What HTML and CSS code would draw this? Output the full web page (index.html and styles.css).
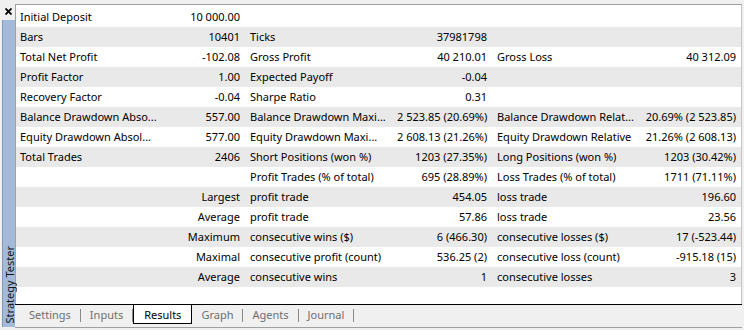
FILE: index.html
```html
<!DOCTYPE html>
<html lang="en">
<head>
    <meta charset="utf-8">
    <link rel="stylesheet" href="styles.css">
</head>
<body>
    <div class="window">
        <div class="side">
            <svg class="close" width="7" height="7" viewBox="0 0 7 7">
                <path d="M0.5 0.5 L6.5 6.5 M6.5 0.5 L0.5 6.5" stroke="#000" stroke-width="1.8" fill="none"/>
            </svg>
            <div class="side-bar">
                <span class="side-title">Strategy Tester</span>
            </div>
        </div>

        <div class="main">
            <div class="report">
                <div class="row">
                    <div class="cell">Initial Deposit</div><div class="cell num">10 000.00</div>
                    <div class="cell"></div><div class="cell num"></div>
                    <div class="cell"></div><div class="cell num"></div>
                </div>
                <div class="row">
                    <div class="cell">Bars</div><div class="cell num">10401</div>
                    <div class="cell">Ticks</div><div class="cell num">37981798</div>
                    <div class="cell"></div><div class="cell num"></div>
                </div>
                <div class="row">
                    <div class="cell">Total Net Profit</div><div class="cell num">-102.08</div>
                    <div class="cell">Gross Profit</div><div class="cell num">40 210.01</div>
                    <div class="cell">Gross Loss</div><div class="cell num">40 312.09</div>
                </div>
                <div class="row">
                    <div class="cell">Profit Factor</div><div class="cell num">1.00</div>
                    <div class="cell">Expected Payoff</div><div class="cell num">-0.04</div>
                    <div class="cell"></div><div class="cell num"></div>
                </div>
                <div class="row">
                    <div class="cell">Recovery Factor</div><div class="cell num">-0.04</div>
                    <div class="cell">Sharpe Ratio</div><div class="cell num">0.31</div>
                    <div class="cell"></div><div class="cell num"></div>
                </div>
                <div class="row">
                    <div class="cell">Balance Drawdown Abso...</div><div class="cell num">557.00</div>
                    <div class="cell">Balance Drawdown Maxi...</div><div class="cell num">2 523.85 (20.69%)</div>
                    <div class="cell">Balance Drawdown Relat...</div><div class="cell num">20.69% (2 523.85)</div>
                </div>
                <div class="row">
                    <div class="cell">Equity Drawdown Absol...</div><div class="cell num">577.00</div>
                    <div class="cell">Equity Drawdown Maxi...</div><div class="cell num">2 608.13 (21.26%)</div>
                    <div class="cell">Equity Drawdown Relative</div><div class="cell num">21.26% (2 608.13)</div>
                </div>
                <div class="row">
                    <div class="cell">Total Trades</div><div class="cell num">2406</div>
                    <div class="cell">Short Positions (won %)</div><div class="cell num">1203 (27.35%)</div>
                    <div class="cell">Long Positions (won %)</div><div class="cell num">1203 (30.42%)</div>
                </div>
                <div class="row">
                    <div class="cell"></div><div class="cell num"></div>
                    <div class="cell">Profit Trades (% of total)</div><div class="cell num">695 (28.89%)</div>
                    <div class="cell">Loss Trades (% of total)</div><div class="cell num">1711 (71.11%)</div>
                </div>
                <div class="row">
                    <div class="cell"></div><div class="cell num">Largest</div>
                    <div class="cell">profit trade</div><div class="cell num">454.05</div>
                    <div class="cell">loss trade</div><div class="cell num">196.60</div>
                </div>
                <div class="row">
                    <div class="cell"></div><div class="cell num">Average</div>
                    <div class="cell">profit trade</div><div class="cell num">57.86</div>
                    <div class="cell">loss trade</div><div class="cell num">23.56</div>
                </div>
                <div class="row">
                    <div class="cell"></div><div class="cell num">Maximum</div>
                    <div class="cell">consecutive wins ($)</div><div class="cell num">6 (466.30)</div>
                    <div class="cell">consecutive losses ($)</div><div class="cell num">17 (-523.44)</div>
                </div>
                <div class="row">
                    <div class="cell"></div><div class="cell num">Maximal</div>
                    <div class="cell">consecutive profit (count)</div><div class="cell num">536.25 (2)</div>
                    <div class="cell">consecutive loss (count)</div><div class="cell num">-915.18 (15)</div>
                </div>
                <div class="row">
                    <div class="cell"></div><div class="cell num">Average</div>
                    <div class="cell">consecutive wins</div><div class="cell num">1</div>
                    <div class="cell">consecutive losses</div><div class="cell num">3</div>
                </div>
            </div>

            <div class="tabs">
                <span class="tab">Settings</span>
                <span class="sep"></span>
                <span class="tab">Inputs</span>
                <span class="sep"></span>
                <span class="tab active">Results</span>
                <span class="tab">Graph</span>
                <span class="sep"></span>
                <span class="tab">Agents</span>
                <span class="sep"></span>
                <span class="tab">Journal</span>
                <span class="sep"></span>
            </div>
        </div>
    </div>
</body>
</html>
```

FILE: styles.css
```css
* {
    margin: 0;
    padding: 0;
    box-sizing: border-box;
}
body {
    background-color: #f0f0f0;
    font-family: "Noto Sans", "Liberation Sans", sans-serif;
    font-size: 11px;
    color: #000;
}
.window {
    display: flex;
    width: 744px;
    height: 330px;
}

/* left docked caption */
.side {
    width: 15px;
    display: flex;
    flex-direction: column;
    padding-top: 8px;
}
.close {
    display: block;
    margin-left: 5px;
}
.side-bar {
    flex: 1;
    margin: 5px 0 3px 2px;
    width: 13px;
    background-color: #a3bbd9;
    border-left: 1px solid #8099bb;
    display: flex;
    align-items: flex-end;
    justify-content: center;
}
.side-title {
    writing-mode: vertical-rl;
    transform: rotate(180deg);
    line-height: 13px;
    margin-bottom: 4px;
    color: #111;
}

.main {
    flex: 1;
    display: flex;
    flex-direction: column;
    padding: 4px 2px 2px 0;
}
.report {
    flex: 1;
    background-color: #fff;
    border-top: 1px solid #a0a0a0;
    border-left: 1px solid #a0a0a0;
    border-right: 1px solid #c4c4c4;
    padding-top: 2px;
}
.row {
    display: grid;
    grid-template-columns: 149px 80px 147px 100px 146px 103px;
    height: 20px;
    line-height: 20px;
}
.row:nth-child(even) {
    background-color: #e9e9e9;
}
.cell {
    padding: 0 5px;
    white-space: nowrap;
}
.row .cell:first-child {
    padding-left: 4px;
}
.num {
    text-align: right;
}

/* bottom tab strip */
.tabs {
    height: 24px;
    display: flex;
    align-items: flex-start;
    padding-left: 5px;
    border-top: 1px solid #000;
    border-bottom: 1px solid #a0a0a0;
}
.tab {
    padding: 0 9px;
    height: 19px;
    line-height: 19px;
    color: #6e6e6e;
}
.tab.active {
    padding: 0 10px;
    background-color: #fff;
    color: #000;
    border: 1px solid #000;
    border-top: none;
}
.sep {
    width: 1px;
    height: 13px;
    margin-top: 4px;
    background-color: #8a8a8a;
}
```
